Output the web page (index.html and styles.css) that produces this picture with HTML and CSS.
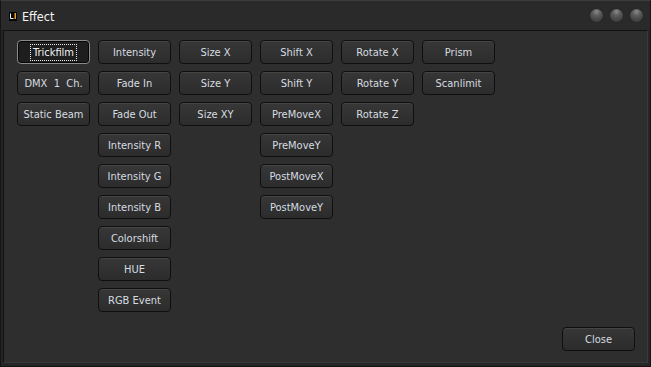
FILE: index.html
```html
<!DOCTYPE html>
<html lang="en">
<head>
  <meta charset="UTF-8">
  <title>Effect</title>
  <link rel="stylesheet" href="styles.css">
</head>
<body>
  <div class="window">

    <div class="titlebar">
      <svg class="app-icon" width="8" height="9" viewBox="0 0 8 9">
        <rect width="8" height="9" fill="#050505"/>
        <path d="M1.5 1.5 V6.5 H4.5" stroke="#f2f2f2" stroke-width="1" fill="none"/>
        <rect x="5.5" y="1" width="1.5" height="6" fill="#e8a020"/>
      </svg>
      <span class="title">Effect</span>
      <div class="knobs">
        <span class="knob"></span>
        <span class="knob"></span>
        <span class="knob"></span>
      </div>
    </div>

    <div class="panel">
      <div class="grid">
        <div class="col">
          <button class="btn active"><span class="focus">Trickfilm</span></button>
          <button class="btn">DMX&nbsp;&nbsp;1&nbsp;&nbsp;Ch.</button>
          <button class="btn">Static Beam</button>
        </div>
        <div class="col">
          <button class="btn">Intensity</button>
          <button class="btn">Fade In</button>
          <button class="btn">Fade Out</button>
          <button class="btn">Intensity R</button>
          <button class="btn">Intensity G</button>
          <button class="btn">Intensity B</button>
          <button class="btn">Colorshift</button>
          <button class="btn">HUE</button>
          <button class="btn">RGB Event</button>
        </div>
        <div class="col">
          <button class="btn">Size X</button>
          <button class="btn">Size Y</button>
          <button class="btn">Size XY</button>
        </div>
        <div class="col">
          <button class="btn">Shift X</button>
          <button class="btn">Shift Y</button>
          <button class="btn">PreMoveX</button>
          <button class="btn">PreMoveY</button>
          <button class="btn">PostMoveX</button>
          <button class="btn">PostMoveY</button>
        </div>
        <div class="col">
          <button class="btn">Rotate X</button>
          <button class="btn">Rotate Y</button>
          <button class="btn">Rotate Z</button>
        </div>
        <div class="col">
          <button class="btn">Prism</button>
          <button class="btn">Scanlimit</button>
        </div>
      </div>

      <div class="footer">
        <button class="btn">Close</button>
      </div>
    </div>

  </div>
</body>
</html>
```

FILE: styles.css
```css
html, body{
  margin: 0; padding: 0;
  background-color: #1c1c1c;
}

.window{
  box-sizing: border-box;
  width: 651px; height: 367px;
  display: flex;
  flex-direction: column;
  background-color: #262626;
  border: 1px solid #141414;
  border-top-color: #3c3c3c;
  font-family: "DejaVu Sans Condensed", "Noto Sans", sans-serif;
}

.titlebar{
  height: 29px;
  display: flex;
  align-items: center;
  padding: 0 8px 0 8px;
  background-color: #2a2a2a;
}

.titlebar .app-icon{
  margin-top: 2px;
}

.titlebar .title{
  margin-left: 5px;
  margin-top: 2px;
  font-size: 12.5px;
  color: #f4f4f4;
}

.knobs{
  margin-left: auto;
  display: flex;
  gap: 7px;
  margin-right: -1px;
}

.knob{
  width: 13px; height: 13px;
  border-radius: 50%;
  background: radial-gradient(circle at 50% 22%, #8a8a8a 0, #5e5e5e 30%, #474747 65%, #383838 100%);
  box-shadow: 0 0 1px #1e1e1e;
}

.panel{
  flex: 1;
  margin: 0 2px 3px 2px;
  display: flex;
  flex-direction: column;
  padding: 9px 12px 11px 13px;
  background-color: #2e2e2e;
  border: 1px solid #121212;
  border-right-color: #3a3a3a;
  border-bottom-color: #3a3a3a;
}

.grid{
  display: flex;
  gap: 8px;
}

.col{
  display: flex;
  flex-direction: column;
  gap: 7px;
}

.btn{
  box-sizing: border-box;
  width: 73px; height: 24px;
  padding: 1px 0 0 0;
  border: 1px solid #0f0f0f;
  border-radius: 4px;
  background: linear-gradient(#373737, #2c2c2c);
  box-shadow: inset 0 1px 0 #454545;
  color: #d6dce0;
  font-family: "DejaVu Sans Condensed", "Noto Sans", sans-serif;
  font-size: 11px;
  white-space: nowrap;
}

.btn.active{
  border: 1px solid #8c8c8c;
  background: #1e1e1e;
  box-shadow: inset 0 0 0 1px #050505;
  color: #f2f2f2;
}

.btn .focus{
  display: inline-block;
  padding: 1px 2px;
  outline: 1px dotted #e8e8e8;
}

.footer{
  margin-top: auto;
  display: flex;
  justify-content: flex-end;
}
```
